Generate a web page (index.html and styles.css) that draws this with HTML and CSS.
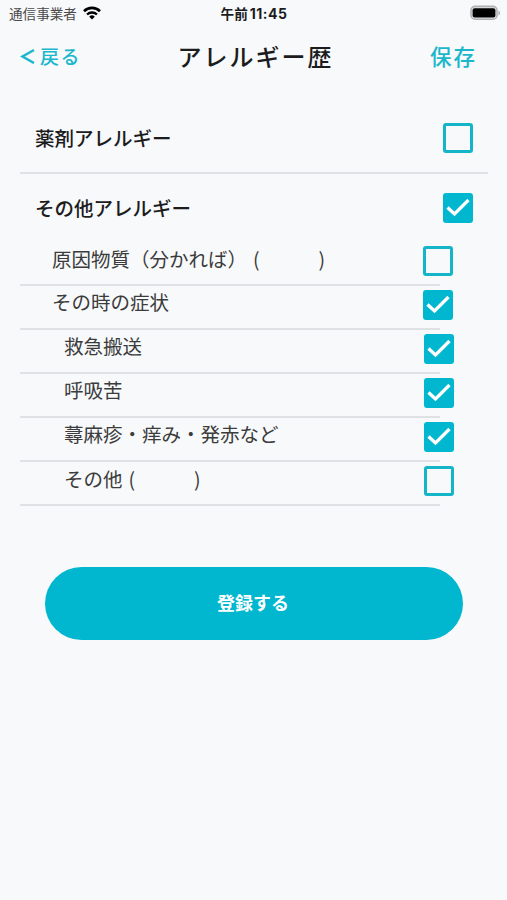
FILE: index.html
```html
<!DOCTYPE html>
<html lang="ja">
<head>
<meta charset="UTF-8">
<meta name="viewport" content="width=device-width, initial-scale=1.0">
<title>アレルギー歴</title>
<link rel="stylesheet" href="styles.css">
</head>
<body>
<div class="status-bar">
  <div class="carrier">
    <span>通信事業者</span>
    <svg class="wifi" viewBox="0 0 18 14" width="18" height="14">
      <path d="M1 5.2a11.4 11.4 0 0 1 16 0" fill="none" stroke="#000" stroke-width="2.6"/>
      <path d="M4 8.5a7.2 7.2 0 0 1 10 0" fill="none" stroke="#000" stroke-width="2.3"/>
      <path d="M9 13.5L6.2 10.7a4 4 0 0 1 5.6 0z"/>
    </svg>
  </div>
  <div class="time">午前<span>11:45</span></div>
  <svg class="battery" viewBox="0 0 31 16" width="31" height="16">
    <rect x="1" y="1.4" width="26" height="12.8" rx="4" fill="#e4e5e6" stroke="#b0b2b4" stroke-width="1.6"/>
    <rect x="2.6" y="3.2" width="22.8" height="9.2" rx="2"/>
    <path d="M28.4 5.4c2.2.9 2.2 4.1 0 5z" fill="#b0b2b4"/>
  </svg>
</div>
<header>
  <a class="back" href="#"><svg viewBox="0 0 15 16" width="15" height="16"><path d="M14 2L2.5 8.5 14 15" fill="none" stroke="#1cb7cc" stroke-width="2.5"/></svg>戻る</a>
  <h1>アレルギー歴</h1>
  <a class="save" href="#">保存</a>
</header>
<main>
  <div class="row drug">
    <span class="label">薬剤アレルギー</span>
    <span class="check"></span>
  </div>
  <div class="row other">
    <span class="label">その他アレルギー</span>
    <span class="check checked"><svg viewBox="0 0 30 30"><path d="M4.5 14.5l7 6.5L25.5 7"/></svg></span>
  </div>
  <div class="sub-list">
    <div class="row sub cause">
      <span class="label">原因物質（分かれば）<span class="blank"><span>(</span><span>)</span></span></span>
      <span class="check"></span>
    </div>
    <div class="row sub">
      <span class="label">その時の症状</span>
      <span class="check checked"><svg viewBox="0 0 30 30"><path d="M4.5 14.5l7 6.5L25.5 7"/></svg></span>
    </div>
    <div class="row sub detail">
      <span class="label">救急搬送</span>
      <span class="check checked"><svg viewBox="0 0 30 30"><path d="M4.5 14.5l7 6.5L25.5 7"/></svg></span>
    </div>
    <div class="row sub detail">
      <span class="label">呼吸苦</span>
      <span class="check checked"><svg viewBox="0 0 30 30"><path d="M4.5 14.5l7 6.5L25.5 7"/></svg></span>
    </div>
    <div class="row sub detail">
      <span class="label">蕁麻疹・痒み・発赤など</span>
      <span class="check checked"><svg viewBox="0 0 30 30"><path d="M4.5 14.5l7 6.5L25.5 7"/></svg></span>
    </div>
    <div class="row sub detail last">
      <span class="label">その他<span class="blank"><span>(</span><span>)</span></span></span>
      <span class="check"></span>
    </div>
  </div>
  <button class="submit">登録する</button>
</main>
</body>
</html>
```
FILE: styles.css
```css
* {
  box-sizing: border-box;
}
body {
  margin: 0;
  min-height: 100vh;
  background-color: #f7f9fb;
  color: #1c1c1c;
  font-family: "Noto Sans CJK JP", sans-serif;
}
.status-bar {
  display: grid;
  grid-template-columns: 1fr auto 1fr;
  align-items: center;
  height: 26px;
  padding: 0 6px 0 7px;
}
.carrier {
  display: flex;
  align-items: center;
  gap: 6px;
  padding-left: 2px;
  font-size: 13.6px;
  color: #4a4a4a;
}
.wifi {
  margin-bottom: 1px;
}
.time {
  font-size: 13.6px;
  font-weight: 700;
}
.time span {
  margin-left: 2px;
  font-family: Inter, sans-serif;
  font-size: 14px;
  letter-spacing: 0.5px;
}
.battery {
  justify-self: end;
}
header {
  display: grid;
  grid-template-columns: 1fr auto 1fr;
  align-items: center;
  height: 59px;
  padding: 0 30px 0 20px;
}
header a {
  color: #1cb7cc;
  font-weight: 500;
  text-decoration: none;
}
.back {
  display: flex;
  align-items: center;
  gap: 5px;
  font-size: 19px;
  letter-spacing: 1.5px;
}
.save {
  justify-self: end;
  font-size: 21.5px;
  letter-spacing: 2px;
}
h1 {
  margin: 0 0 0 14px;
  font-size: 24px;
  font-weight: 500;
  letter-spacing: 2px;
}
main {
  padding: 19px 19px 0 20px;
}
.row {
  display: flex;
  justify-content: space-between;
  align-items: flex-start;
}
.drug,
.other {
  padding: 19px 15px 0;
  font-size: 19.5px;
  font-weight: 500;
  line-height: 30px;
}
.drug {
  height: 70px;
  border-bottom: 2px solid #e0e1e4;
}
.other {
  height: 68px;
}
.sub-list {
  width: 420px;
}
.sub {
  height: 44px;
  padding: 4px 0 0 32px;
  border-bottom: 2px solid #e0e1e4;
  color: #3c3c3c;
  font-size: 19.5px;
  line-height: 24px;
}
.sub .check {
  margin-right: -13px;
}
.detail {
  padding-left: 44px;
}
.detail .check {
  margin-right: -14px;
}
.cause .label,
.last .label {
  padding-top: 1px;
}
.blank {
  display: inline-flex;
  justify-content: space-between;
  width: 72px;
  margin-left: 6px;
}
.check {
  flex: none;
  width: 30px;
  height: 30px;
  border: 3px solid #14b4c9;
  border-radius: 3px;
}
.checked {
  border: none;
  background-color: #00b7cf;
}
.check svg {
  display: block;
}
.check path {
  fill: none;
  stroke: #fff;
  stroke-width: 3.3;
}
.submit {
  display: block;
  width: 418px;
  height: 73px;
  margin: 61px 0 0 25px;
  padding: 0 2px 3px 0;
  border: none;
  border-radius: 37px;
  background-color: #00b7cf;
  color: #fff;
  font-family: inherit;
  font-size: 18px;
  font-weight: 700;
}
```
